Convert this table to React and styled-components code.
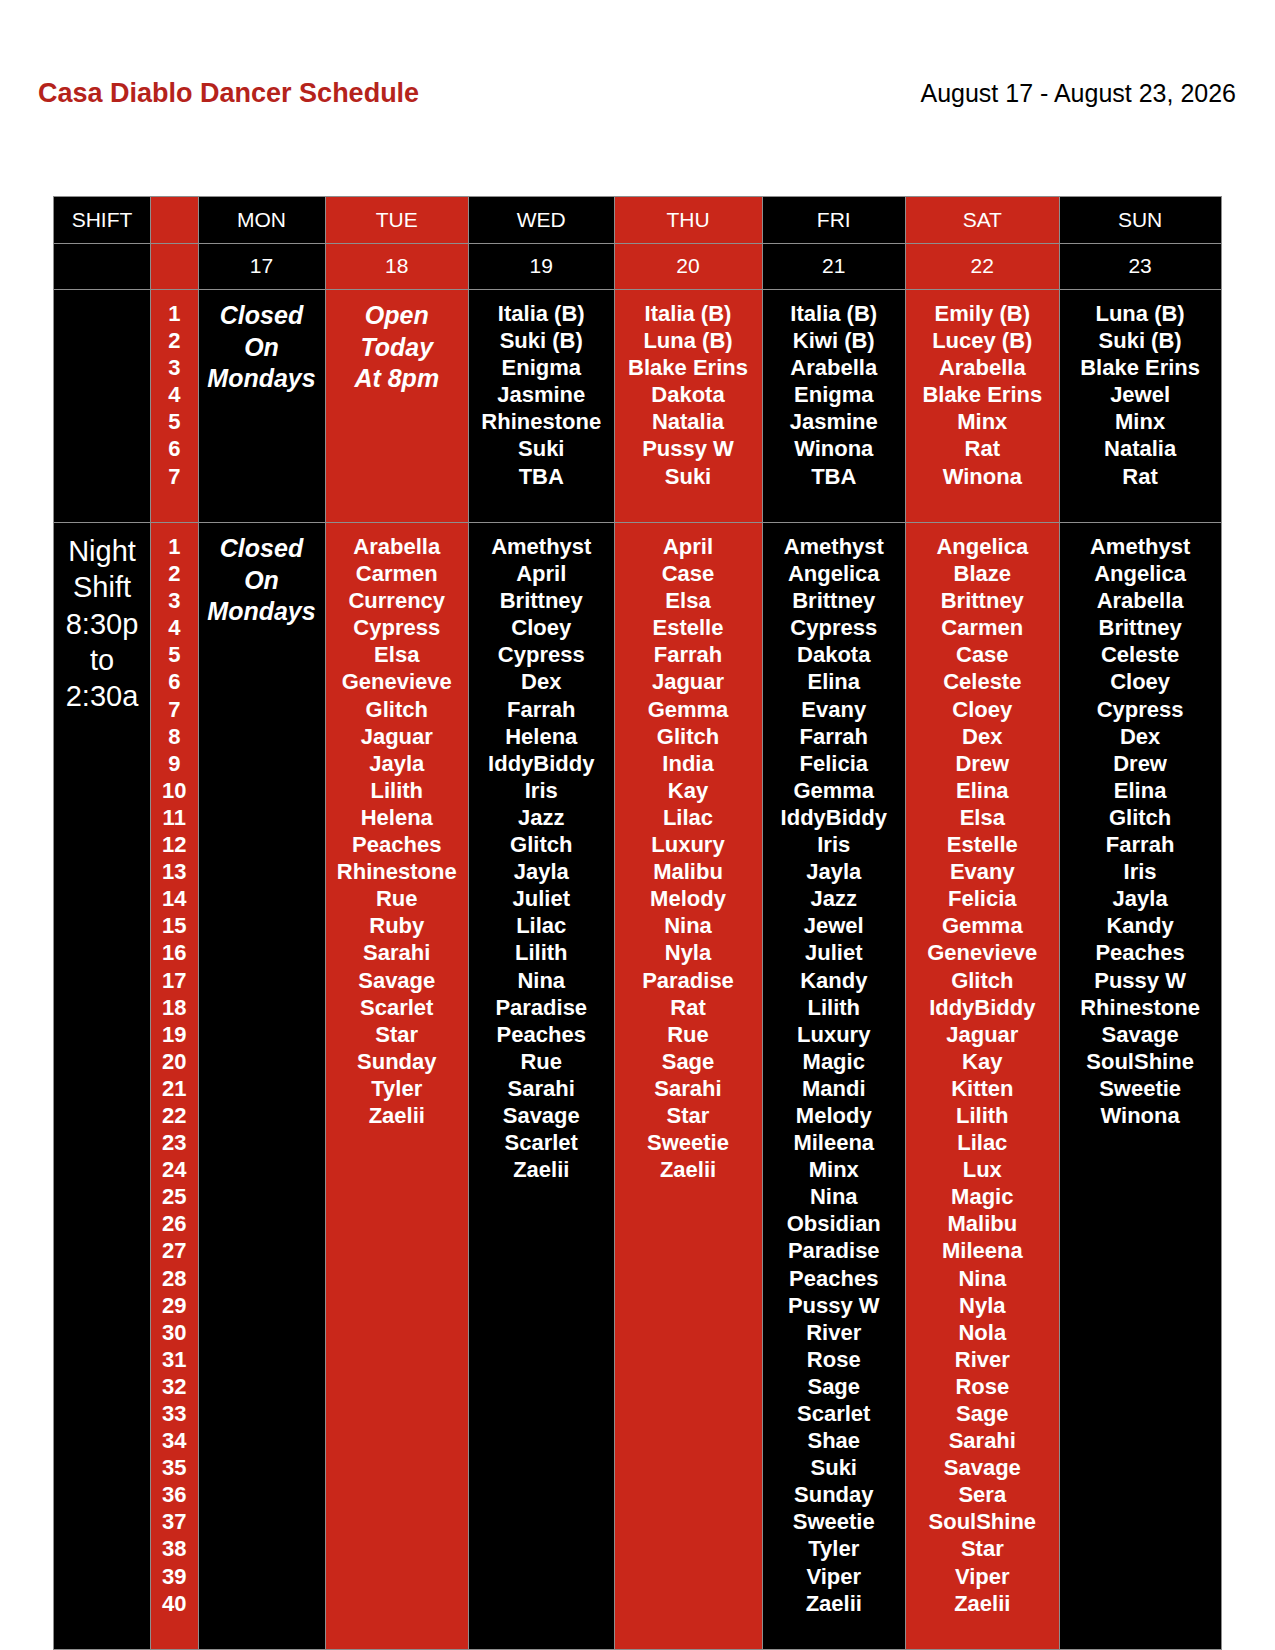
import React from "react";
import styled, { createGlobalStyle } from "styled-components";

const GlobalStyle = createGlobalStyle`
    html, body {
        margin: 0;
        padding: 0;
        background: #ffffff;
    }
    body {
        font-family: "Liberation Sans", Arial, Helvetica, sans-serif;
    }
`;

const RED = "#c9271a";

const days = [
    { name: "MON", date: 17, red: false, width: 127 },
    { name: "TUE", date: 18, red: true, width: 143.5 },
    { name: "WED", date: 19, red: false, width: 145.5 },
    { name: "THU", date: 20, red: true, width: 148 },
    { name: "FRI", date: 21, red: false, width: 143.5 },
    { name: "SAT", date: 22, red: true, width: 153.6 },
    { name: "SUN", date: 23, red: false, width: 162 },
];

const dayShift = [
    { note: ["Closed", "On", "Mondays"] },
    { note: ["Open", "Today", "At 8pm"] },
    { names: ["Italia (B)", "Suki (B)", "Enigma", "Jasmine", "Rhinestone", "Suki", "TBA"] },
    { names: ["Italia (B)", "Luna (B)", "Blake Erins", "Dakota", "Natalia", "Pussy W", "Suki"] },
    { names: ["Italia (B)", "Kiwi (B)", "Arabella", "Enigma", "Jasmine", "Winona", "TBA"] },
    { names: ["Emily (B)", "Lucey (B)", "Arabella", "Blake Erins", "Minx", "Rat", "Winona"] },
    { names: ["Luna (B)", "Suki (B)", "Blake Erins", "Jewel", "Minx", "Natalia", "Rat"] },
];

const nightShift = [
    { note: ["Closed", "On", "Mondays"] },
    {
        names: ["Arabella", "Carmen", "Currency", "Cypress", "Elsa", "Genevieve", "Glitch", "Jaguar",
            "Jayla", "Lilith", "Helena", "Peaches", "Rhinestone", "Rue", "Ruby", "Sarahi", "Savage",
            "Scarlet", "Star", "Sunday", "Tyler", "Zaelii"],
    },
    {
        names: ["Amethyst", "April", "Brittney", "Cloey", "Cypress", "Dex", "Farrah", "Helena",
            "IddyBiddy", "Iris", "Jazz", "Glitch", "Jayla", "Juliet", "Lilac", "Lilith", "Nina",
            "Paradise", "Peaches", "Rue", "Sarahi", "Savage", "Scarlet", "Zaelii"],
    },
    {
        names: ["April", "Case", "Elsa", "Estelle", "Farrah", "Jaguar", "Gemma", "Glitch", "India",
            "Kay", "Lilac", "Luxury", "Malibu", "Melody", "Nina", "Nyla", "Paradise", "Rat", "Rue",
            "Sage", "Sarahi", "Star", "Sweetie", "Zaelii"],
    },
    {
        names: ["Amethyst", "Angelica", "Brittney", "Cypress", "Dakota", "Elina", "Evany", "Farrah",
            "Felicia", "Gemma", "IddyBiddy", "Iris", "Jayla", "Jazz", "Jewel", "Juliet", "Kandy",
            "Lilith", "Luxury", "Magic", "Mandi", "Melody", "Mileena", "Minx", "Nina", "Obsidian",
            "Paradise", "Peaches", "Pussy W", "River", "Rose", "Sage", "Scarlet", "Shae", "Suki",
            "Sunday", "Sweetie", "Tyler", "Viper", "Zaelii"],
    },
    {
        names: ["Angelica", "Blaze", "Brittney", "Carmen", "Case", "Celeste", "Cloey", "Dex", "Drew",
            "Elina", "Elsa", "Estelle", "Evany", "Felicia", "Gemma", "Genevieve", "Glitch",
            "IddyBiddy", "Jaguar", "Kay", "Kitten", "Lilith", "Lilac", "Lux", "Magic", "Malibu",
            "Mileena", "Nina", "Nyla", "Nola", "River", "Rose", "Sage", "Sarahi", "Savage", "Sera",
            "SoulShine", "Star", "Viper", "Zaelii"],
    },
    {
        names: ["Amethyst", "Angelica", "Arabella", "Brittney", "Celeste", "Cloey", "Cypress", "Dex",
            "Drew", "Elina", "Glitch", "Farrah", "Iris", "Jayla", "Kandy", "Peaches", "Pussy W",
            "Rhinestone", "Savage", "SoulShine", "Sweetie", "Winona"],
    },
];

const range = (n) => Array.from({ length: n }, (_, i) => i + 1);

const App = () => {
    return (
        <Page>
            <GlobalStyle />
            <Header>
                <Title>Casa Diablo Dancer Schedule</Title>
                <DateRange>August 17 - August 23, 2026</DateRange>
            </Header>
            <Schedule>
                <colgroup>
                    <col style={{ width: 97 }} />
                    <col style={{ width: 47.5 }} />
                    {days.map((d) => (
                        <col key={d.name} style={{ width: d.width }} />
                    ))}
                </colgroup>
                <thead>
                    <HeadRow>
                        <HeadCell>SHIFT</HeadCell>
                        <HeadCell $red />
                        {days.map((d) => (
                            <HeadCell key={d.name} $red={d.red}>
                                {d.name}
                            </HeadCell>
                        ))}
                    </HeadRow>
                    <HeadRow>
                        <HeadCell />
                        <HeadCell $red />
                        {days.map((d) => (
                            <HeadCell key={d.name} $red={d.red}>
                                {d.date}
                            </HeadCell>
                        ))}
                    </HeadRow>
                </thead>
                <tbody>
                    <ShiftRow $height={233}>
                        <ShiftCell />
                        <NumberCell>
                            {range(7).map((n) => (
                                <Line key={n}>{n}</Line>
                            ))}
                        </NumberCell>
                        {dayShift.map((col, i) => (
                            <NameCell key={i} $red={days[i].red}>
                                {col.note
                                    ? col.note.map((t) => <Note key={t}>{t}</Note>)
                                    : col.names.map((t, j) => <Line key={j}>{t}</Line>)}
                            </NameCell>
                        ))}
                    </ShiftRow>
                    <ShiftRow $height={1127}>
                        <ShiftCell>
                            <ShiftLabel>Night</ShiftLabel>
                            <ShiftLabel>Shift</ShiftLabel>
                            <ShiftLabel>8:30p</ShiftLabel>
                            <ShiftLabel>to</ShiftLabel>
                            <ShiftLabel>2:30a</ShiftLabel>
                        </ShiftCell>
                        <NumberCell>
                            {range(40).map((n) => (
                                <Line key={n}>{n}</Line>
                            ))}
                        </NumberCell>
                        {nightShift.map((col, i) => (
                            <NameCell key={i} $red={days[i].red}>
                                {col.note
                                    ? col.note.map((t) => <Note key={t}>{t}</Note>)
                                    : col.names.map((t, j) => <Line key={j}>{t}</Line>)}
                            </NameCell>
                        ))}
                    </ShiftRow>
                </tbody>
            </Schedule>
        </Page>
    );
};

const Page = styled.div`
    width: 1275px;
    height: 1650px;
    box-sizing: border-box;
    padding: 77px 39px 0 38px;
    overflow: hidden;
    background: #ffffff;
`;

const Header = styled.div`
    display: flex;
    justify-content: space-between;
    align-items: baseline;
    height: 32px;
`;

const Title = styled.h1`
    margin: 0;
    font-size: 27px;
    line-height: 32px;
    font-weight: 700;
    color: #b5231b;
`;

const DateRange = styled.div`
    font-size: 25px;
    line-height: 32px;
    color: #000000;
`;

const Schedule = styled.table`
    width: 1168px;
    margin: 87px 0 0 15px;
    border-collapse: collapse;
    table-layout: fixed;
    color: #ffffff;
`;

const HeadRow = styled.tr`
    height: 46.5px;
`;

const HeadCell = styled.th`
    padding: 0;
    border: 1px solid #8e8e8e;
    background: ${(p) => (p.$red ? RED : "#000000")};
    font-size: 21px;
    font-weight: 400;
    text-align: center;
    vertical-align: middle;
`;

const ShiftRow = styled.tr`
    height: ${(p) => p.$height}px;
`;

const BodyCell = styled.td`
    padding: 10px 0 0;
    border: 1px solid #8e8e8e;
    text-align: center;
    vertical-align: top;
`;

const ShiftCell = styled(BodyCell)`
    background: #000000;
`;

const NumberCell = styled(BodyCell)`
    background: ${RED};
`;

const NameCell = styled(BodyCell)`
    background: ${(p) => (p.$red ? RED : "#000000")};
`;

const Line = styled.div`
    font-size: 22px;
    line-height: 27.1px;
    font-weight: 700;
    white-space: nowrap;
`;

const Note = styled.div`
    font-size: 25px;
    line-height: 31.6px;
    font-weight: 700;
    font-style: italic;
`;

const ShiftLabel = styled.div`
    font-size: 29px;
    line-height: 36.3px;
    font-weight: 400;
`;

export default App;
